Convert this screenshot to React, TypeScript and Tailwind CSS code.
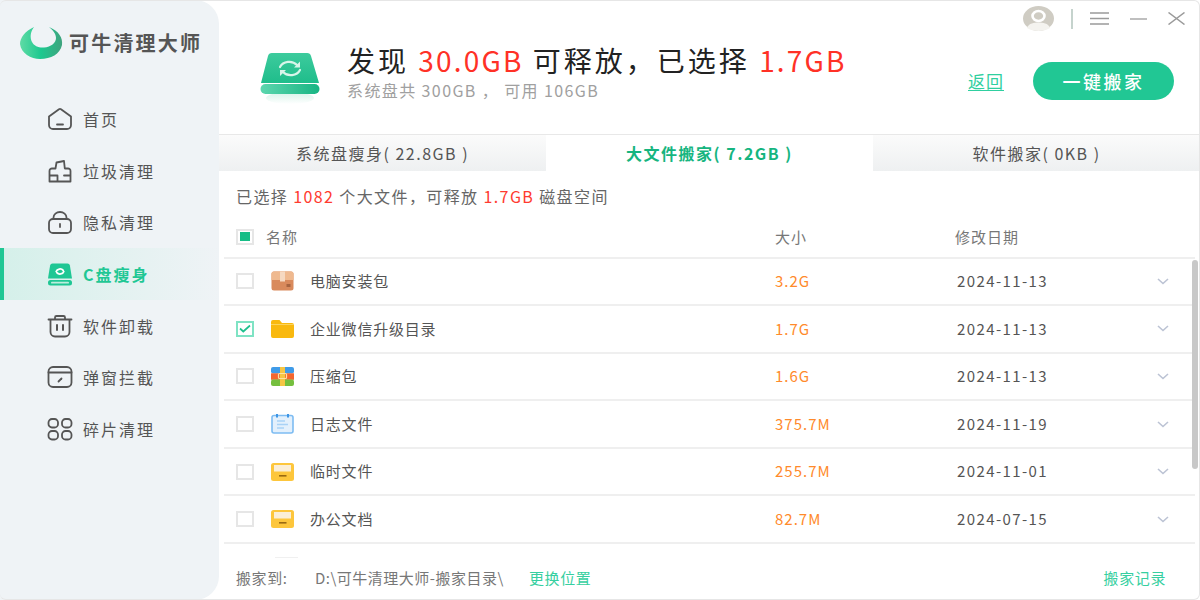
import React from "react";

const S = { fill: "none", stroke: "#555", strokeWidth: 1.8, strokeLinecap: "round", strokeLinejoin: "round" } as const;

const IconHome = () => (
  <svg width="26" height="24" viewBox="0 0 26 24"><g {...S}><path d="M2 9.5 12 2.2a2 2 0 0 1 2 0L24 9.5V18a4 4 0 0 1-4 4H6a4 4 0 0 1-4-4Z" /><path d="M10 17.5h6" /></g></svg>
);
const IconBroom = () => (
  <svg width="26" height="24" viewBox="0 0 26 24"><g {...S}><path d="M2.5 22.5V12a2.500 2.500 0 0 1 2.500-2.500h3.500L9.500 3.500 17 2l.8 7.500H21a2.500 2.500 0 0 1 2.500 2.500v10.500Z" /><path d="M3 16.500h7.500v5.500M17 16.500h6" /></g></svg>
);
const IconLock = () => (
  <svg width="26" height="24" viewBox="0 0 26 24"><g {...S}><rect x="2" y="9" width="22" height="14" rx="4" /><path d="M6.500 9V7.500a6.500 5.500 0 0 1 13 0V9" /><path d="M13 14v3" /></g></svg>
);
const IconDisk = () => (
  <svg width="26" height="24" viewBox="0 0 26 24">
    <path d="M5.500 1.500h15a2.500 2.500 0 0 1 2.400 2L25 16.500H1L3.100 3.500a2.500 2.500 0 0 1 2.400-2Z" fill="#1fc794" />
    <rect x="1" y="18" width="24" height="5.500" rx="2.500" fill="#1fc794" />
    <rect x="4" y="19.800" width="18" height="1.800" rx="0.900" fill="#bdeedd" />
    <path d="M9.200 9.500a4 3.500 0 0 1 7-1.200M16.800 9.500a4 3.500 0 0 1-7 1.200" fill="none" stroke="#fff" strokeWidth="1.800" strokeLinecap="round" />
  </svg>
);
const IconTrash = () => (
  <svg width="26" height="24" viewBox="0 0 26 24"><g {...S}><path d="M1.500 5.500h23" /><path d="M8 5V3.500A1.500 1.500 0 0 1 9.500 2h7A1.500 1.500 0 0 1 18 3.500V5" /><path d="M3.500 6v12a4.500 4.500 0 0 0 4.500 4.500h10a4.500 4.500 0 0 0 4.500-4.500V6" /><path d="M10 11v5M16 11v5" strokeWidth="2" /></g></svg>
);
const IconPopup = () => (
  <svg width="26" height="24" viewBox="0 0 26 24"><g {...S}><rect x="1.500" y="2" width="23" height="20" rx="4.500" /><path d="M1.500 7.500h23" /><path d="M11.500 16.500l3-3" /></g></svg>
);
const IconGrid = () => (
  <svg width="26" height="24" viewBox="0 0 26 24"><g {...S}><rect x="1.500" y="2" width="9.500" height="8.500" rx="3.500" /><rect x="15" y="2" width="9.500" height="8.500" rx="3.500" /><rect x="1.500" y="14" width="9.500" height="8.500" rx="3.500" /><rect x="15" y="14" width="9.500" height="8.500" rx="3.500" /></g></svg>
);

const nav = [
  { label: "首页", icon: <IconHome /> },
  { label: "垃圾清理", icon: <IconBroom /> },
  { label: "隐私清理", icon: <IconLock /> },
  { label: "C盘瘦身", icon: <IconDisk />, active: true },
  { label: "软件卸载", icon: <IconTrash /> },
  { label: "弹窗拦截", icon: <IconPopup /> },
  { label: "碎片清理", icon: <IconGrid /> },
];

const Logo = () => (
  <svg width="44" height="34" viewBox="0 0 44 34">
    <defs>
      <linearGradient id="lg" x1="0" x2="1" y1="0" y2="0">
        <stop offset="0" stopColor="#5fdba5" />
        <stop offset="0.5" stopColor="#1cc88f" />
        <stop offset="1" stopColor="#3fa37e" />
      </linearGradient>
    </defs>
    <path d="M14 1C5 5 0 12 0 18c1 9 11 15 20 15 11 0 20-5 22-14 1-7-3-14-13-18C33 4 36 8 36 12C36 17 31 21 24 21.500C19 22 14 20 12 16C10 12 10 6 14 1Z" fill="url(#lg)" />
  </svg>
);

const BigDisk = () => (
  <svg width="60" height="56" viewBox="0 0 60 56">
    <defs>
      <linearGradient id="bd" x1="0" x2="0" y1="0" y2="1">
        <stop offset="0" stopColor="#3dcb9d" />
        <stop offset="1" stopColor="#1fbd8b" />
      </linearGradient>
      <linearGradient id="bp" x1="0" x2="1" y1="0" y2="0">
        <stop offset="0" stopColor="#5cd6ae" />
        <stop offset="1" stopColor="#18b583" />
      </linearGradient>
      <linearGradient id="sh" x1="0" x2="0" y1="0" y2="1">
        <stop offset="0" stopColor="#d6f3e9" />
        <stop offset="1" stopColor="#ffffff" />
      </linearGradient>
    </defs>
    <ellipse cx="30" cy="46" rx="24" ry="6" fill="url(#sh)" />
    <path d="M12 1h35a4 4 0 0 1 4 3l8 27H1L8 4a4 4 0 0 1 4-3Z" fill="url(#bd)" />
    <rect x="0.500" y="32" width="59" height="10" rx="5" fill="url(#bp)" />
    <g fill="none" stroke="#d8f5ea" strokeWidth="2.200" strokeLinecap="round">
      <path d="M20 15a10 8.500 0 0 1 17-2" />
      <path d="M40 18a10 8.500 0 0 1-17 2" />
    </g>
    <path d="M40 9.500v6h-6Z M20 24v-6h6Z" fill="#d8f5ea" />
  </svg>
);

const Box = () => (
  <svg width="23" height="20" viewBox="0 0 23 20">
    <rect x="0.500" y="0.500" width="22" height="19" rx="2.500" fill="#d98a5c" />
    <path d="M3 .5h17a2.500 2.500 0 0 1 2.500 2.500v6H.5V3A2.500 2.500 0 0 1 3 .5Z" fill="#efb98f" />
    <rect x="9" y="0.500" width="5" height="10" fill="#f6d9c1" />
    <rect x="15.500" y="13" width="4" height="3" fill="#a76440" />
  </svg>
);
const Folder = () => (
  <svg width="23" height="18" viewBox="0 0 23 18">
    <path d="M2 0h6.500l2.500 3h10a2 2 0 0 1 2 2v11a2 2 0 0 1-2 2H2a2 2 0 0 1-2-2V2a2 2 0 0 1 2-2Z" fill="#f9b90f" />
    <rect x="0" y="4" width="23" height="1" fill="#fcd45c" />
  </svg>
);
const Zip = () => (
  <svg width="23" height="19" viewBox="0 0 23 19">
    <rect width="23" height="6.500" y="0" rx="2" fill="#3f9be8" />
    <rect width="23" height="6.500" y="6.300" fill="#f3662f" />
    <rect width="23" height="6.500" y="12.500" rx="2" fill="#75bf3e" />
    <rect x="9" y="0" width="5" height="19" fill="#f6c644" />
    <rect x="7.500" y="6.500" width="8" height="5" rx="1" fill="none" stroke="#fde3a0" strokeWidth="1.200" />
  </svg>
);
const Note = () => (
  <svg width="23" height="20" viewBox="0 0 23 20">
    <rect x="1" y="1.500" width="21" height="17.500" rx="2" fill="#e3f0fc" stroke="#7dbcf2" strokeWidth="1.600" />
    <rect x="5" y="0" width="2" height="3.500" fill="#3d95e5" />
    <rect x="16" y="0" width="2" height="3.500" fill="#3d95e5" />
    <path d="M6 7h8M6 10.500h11M6 14h7" stroke="#a9d2f6" strokeWidth="1.400" />
  </svg>
);
const Drawer = () => (
  <svg width="23" height="18" viewBox="0 0 23 18">
    <rect width="23" height="18" rx="2.500" fill="#fdc63c" />
    <rect x="3" y="2" width="17" height="6.500" fill="#fbeed6" />
    <rect x="8" y="12" width="7.500" height="1.600" fill="#9a6a12" />
  </svg>
);

const rows = [
  { name: "电脑安装包", size: "3.2G", date: "2024-11-13", icon: <Box /> },
  { name: "企业微信升级目录", size: "1.7G", date: "2024-11-13", icon: <Folder />, checked: true },
  { name: "压缩包", size: "1.6G", date: "2024-11-13", icon: <Zip /> },
  { name: "日志文件", size: "375.7M", date: "2024-11-19", icon: <Note /> },
  { name: "临时文件", size: "255.7M", date: "2024-11-01", icon: <Drawer /> },
  { name: "办公文档", size: "82.7M", date: "2024-07-15", icon: <Drawer /> },
];

const Check = ({ checked }: { checked?: boolean }) =>
  checked ? (
    <span className="flex h-[16px] w-[18px] items-center justify-center border-2 border-[#7fe3c4] bg-white">
      <svg width="12" height="9" viewBox="0 0 12 9"><path d="M1 4.500 4.300 7.500 11 1.500" fill="none" stroke="#1fc08e" strokeWidth="1.700" /></svg>
    </span>
  ) : (
    <span className="block h-[16px] w-[18px] border-2 border-[#e6e6e6] bg-white" />
  );

const Chevron = () => (
  <svg width="12" height="7" viewBox="0 0 12 7"><path d="M1 1l5 4.500L11 1" fill="none" stroke="#bcc3d4" strokeWidth="1.600" /></svg>
);

export default function App() {
  const font = "font-['Noto_Sans_CJK_SC','Noto_Sans',sans-serif]";
  return (
    <div className={`relative flex h-[600px] w-[1200px] overflow-hidden bg-white ${font}`}>
      {/* sidebar */}
      <aside className="flex h-full w-[219px] shrink-0 flex-col rounded-tr-[24px] rounded-br-[24px] bg-[#eff3f6]">
        <div className="flex h-[93px] items-center gap-[5px] pb-[7px] pl-[20px]">
          <Logo />
          <span className="text-[20px] font-bold tracking-[2.2px] whitespace-nowrap text-[#555]">可牛清理大师</span>
        </div>
        <nav className="flex flex-col">
          {nav.map((n) => (
            <div
              key={n.label}
              className={
                n.active
                  ? "flex h-[51.700px] items-center gap-[10px] border-l-[4px] border-[#1fc794] bg-gradient-to-r from-[#d5f0ea] to-[#eff3f6] pl-[43px] text-[#1fc794]"
                  : "flex h-[51.700px] items-center gap-[10px] pl-[47px] text-[#555]"
              }
            >
              {n.icon}
              <span className={`text-[16px] tracking-[2px] whitespace-nowrap ${n.active ? "font-bold" : ""}`}>{n.label}</span>
            </div>
          ))}
        </nav>
      </aside>

      {/* main */}
      <main className="flex h-full min-w-0 flex-1 flex-col">
        <header className="relative flex h-[135px] shrink-0 border-b border-[#e8e8e8]">
          <div className="absolute top-[6px] right-[15px] flex h-[25px] items-center">
            <svg width="31" height="25" viewBox="0 0 31 25">
              <ellipse cx="15.500" cy="12.500" rx="15.500" ry="12.500" fill="#cfccc3" />
              <ellipse cx="15.500" cy="10" rx="6" ry="5" fill="none" stroke="#fff" strokeWidth="2.600" />
              <path d="M4 22c2-5 7-5.500 11.500-5.500S25 17 27 22c-3 2-7 3-11.500 3S7 24 4 22Z" fill="#f4f3ef" />
            </svg>
            <span className="ml-[17px] h-[20px] w-[2px] bg-[#c5d3cd]" />
            <svg className="ml-[17px]" width="19" height="13" viewBox="0 0 19 13"><path d="M0 1h19M0 6.500h19M0 12h19" stroke="#9a9a9a" strokeWidth="1.500" /></svg>
            <svg className="ml-[21px]" width="17" height="2" viewBox="0 0 17 2"><path d="M0 1h17" stroke="#aaa" strokeWidth="1.500" /></svg>
            <svg className="ml-[21px]" width="17" height="13" viewBox="0 0 17 13"><path d="M.5.500l16 12M16.500.500l-16 12" stroke="#9a9a9a" strokeWidth="1.500" /></svg>
          </div>
          <div className="mt-[52px] ml-[41px] shrink-0"><BigDisk /></div>
          <div className="mt-[38px] ml-[27px] flex-1">
            <div className="text-[28px] leading-[44px] tracking-[3px] whitespace-nowrap text-[#222]">
              发现 <span className="tracking-[2.2px] text-[#ff3126]">30.0GB</span> 可释放，已选择 <span className="tracking-[2.2px] text-[#ff3126]">1.7GB</span>
            </div>
            <div className="-mt-[2px] text-[16px] leading-[20px] tracking-[1.4px] whitespace-nowrap text-[#a0a0a0]">系统盘共 300GB ， 可用 106GB</div>
          </div>
          <div className="mt-[62px] mr-[26px] flex h-[38px] shrink-0 items-center gap-[29px]">
            <span className="text-[17px] tracking-[1px] text-[#2fcfa0] underline underline-offset-2">返回</span>
            <span className="flex h-[38px] w-[141px] items-center justify-center rounded-full bg-[#21c794] text-[18px] font-medium tracking-[2.5px] text-white">一键搬家</span>
          </div>
        </header>

        <div className="grid h-[36px] shrink-0 grid-cols-3">
          {[
            ["系统盘瘦身( 22.8GB )", false],
            ["大文件搬家( 7.2GB )", true],
            ["软件搬家( 0KB )", false],
          ].map(([t, a]) => (
            <div
              key={t as string}
              className={
                a
                  ? "flex items-center justify-center bg-white text-[16px] font-bold tracking-[1.5px] text-[#16b57f]"
                  : "flex items-center justify-center bg-gradient-to-b from-[#fbfbfb] to-[#eef0f1] text-[16px] tracking-[1.5px] text-[#555]"
              }
            >
              {t as string}
            </div>
          ))}
        </div>

        <div className="mt-[14px] ml-[17px] text-[16px] leading-[22px] tracking-[1.4px] whitespace-nowrap text-[#666]">
          已选择 <span className="text-[#ff3b30]">1082</span> 个大文件，可释放 <span className="text-[#ff3b30]">1.7GB</span> 磁盘空间
        </div>

        {/* list head */}
        <div className="mt-[9px] mr-[5px] ml-[5px] flex h-[42.500px] shrink-0 items-center border-b-2 border-[#efefef] pt-[1px] text-[15px] tracking-[1px] text-[#777]">
          <span className="ml-[12px] flex h-[16px] w-[18px] items-center justify-center border-2 border-[#e6e6e6]">
            <span className="h-[9px] w-[10px] bg-[#16bd86]" />
          </span>
          <span className="ml-[12px] w-[509px]">名称</span>
          <span className="w-[180px]">大小</span>
          <span>修改日期</span>
        </div>

        {/* list */}
        <div className="mr-[5px] ml-[5px] h-[300px] overflow-hidden">
          {rows.map((r) => (
            <div key={r.name} className="flex h-[47.6px] items-center border-b-2 border-[#efefef] text-[15px] whitespace-nowrap">
              <span className="ml-[12px]"><Check checked={r.checked} /></span>
              <span className="ml-[16px] flex w-[24px] justify-center">{r.icon}</span>
              <span className="ml-[16px] w-[465px] tracking-[0.8px] text-[#555]">{r.name}</span>
              <span className="w-[182px] tracking-[1px] text-[#ff8a2b]">{r.size}</span>
              <span className="w-[200px] tracking-[1.4px] text-[#555]">{r.date}</span>
              <Chevron />
            </div>
          ))}
          <div className="flex h-[48px] items-start pl-[51px]"><span className="mt-[13px] block h-[3px] w-[23px] bg-[#f0f0f0]" /></div>
        </div>

        {/* footer */}
        <div className="absolute right-[1px] bottom-[1px] left-[219px] flex h-[41px] items-center bg-white text-[15px] whitespace-nowrap">
          <span className="ml-[17px] w-[79px] tracking-[0.6px] text-[#777]">搬家到:</span>
          <span className="w-[214px] tracking-[0.5px] text-[#777]">D:\可牛清理大师-搬家目录\</span>
          <span className="tracking-[0.6px] text-[#36cfa0]">更换位置</span>
          <span className="mr-[33px] ml-auto tracking-[0.6px] text-[#36cfa0]">搬家记录</span>
        </div>

        {/* scrollbar */}
        <div className="absolute top-[260px] right-[2px] h-[209px] w-[6px] rounded-full bg-[#c8c8c8]" />
      </main>

      {/* window edge */}
      <div className="pointer-events-none absolute inset-0 rounded-[6px] border-t border-r border-b border-[#e6e6e6]" />
    </div>
  );
}
